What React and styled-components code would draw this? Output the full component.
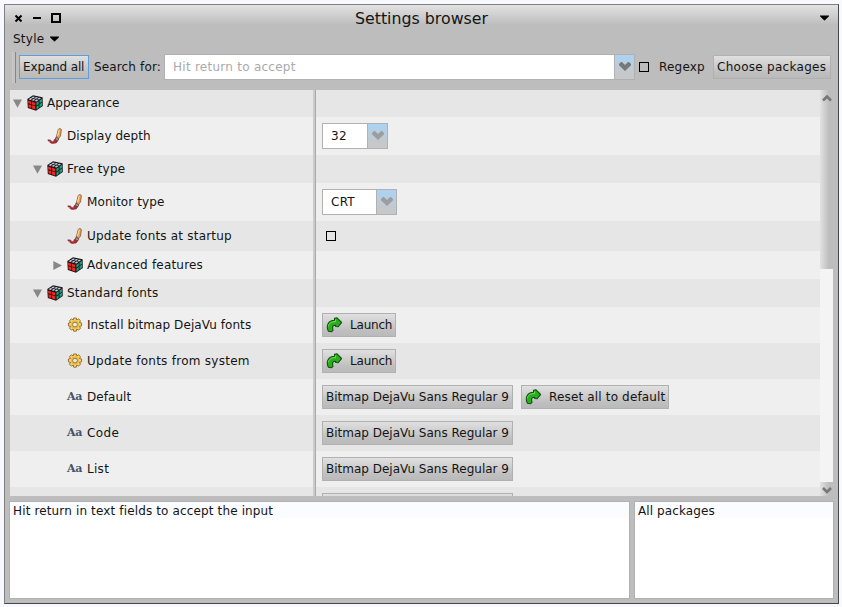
import React from "react";
import styled, { createGlobalStyle, css } from "styled-components";

const Global = createGlobalStyle`
  * { box-sizing: border-box; }
  body { margin: 0; background: #f8f8ff; overflow: hidden; }
`;

const face = "linear-gradient(#e0e0e0, #bfbfbf 75%, #bababa)";

const Window = styled.main`
  width: 835px;
  height: 600px;
  margin: 4px 0 0 4px;
  display: flex;
  flex-direction: column;
  border: 1px solid #808080;
  border-right-color: #45484b;
  border-bottom-color: #45484b;
  background: linear-gradient(#e2e2e2, #bdbdbd 20px);
  color: #141414;
  font: 12px/16px "DejaVu Sans", "Noto Sans", sans-serif;
  white-space: nowrap;
`;
const Text = styled.span`
  letter-spacing: ${(p) => p.$track || 0}px;
`;
const TitleBar = styled.header`
  height: 25px;
  display: flex;
  align-items: center;
  padding: 1px 9px 0 9px;
`;
const WindowControls = styled.div`
  flex: 1;
  display: flex;
  svg { display: block; }
`;
const Title = styled.h1`
  margin: 0;
  padding-top: 1px;
  font-size: 15.8px;
  font-weight: 400;
  line-height: 20px;
`;
const TitleEnd = styled.div`
  flex: 1;
  display: flex;
  justify-content: flex-end;
`;
const MenuBar = styled.nav`
  height: 18px;
  display: flex;
  align-items: center;
  gap: 6px;
  padding-left: 8px;
`;
const Toolbar = styled.div`
  height: 42px;
  display: flex;
  align-items: center;
  padding: 0 7px 4px 7px;
`;
const Grip = styled.span`
  width: 4px;
  height: 31px;
  margin: 1px 3px 0 0;
  border-left: 1px solid #c9c9c9;
  border-right: 1px solid #868686;
  background: #c3c3c3;
`;
const Button = styled.button`
  height: 24px;
  width: ${(p) => p.$w}px;
  display: flex;
  align-items: center;
  gap: 8px;
  flex: none;
  padding: 0 0 0 3px;
  border: 1px solid ${(p) => (p.$focused ? "#5c9ede" : "#b1b1b1")};
  background: ${face};
  color: inherit;
  font: inherit;
  white-space: nowrap;
`;
const SearchLabel = styled.label`
  width: 70px;
  margin-left: 5px;
  letter-spacing: 0.15px;
`;
const Combo = styled.div`
  width: ${(p) => p.$w}px;
  height: 26px;
  display: flex;
  border: 1px solid #b1b1b1;
  background: #fff;
`;
const ComboValue = styled.span`
  flex: 1;
  padding-left: 8px;
  line-height: 24px;
  letter-spacing: 0.26px;
  color: ${(p) => (p.$hint ? "#aaa" : "inherit")};
`;
const ComboArrow = styled.span`
  width: 20px;
  display: flex;
  align-items: center;
  justify-content: center;
  padding-bottom: 1px;
  border-left: 1px solid #b1b1b1;
  background: linear-gradient(#abd3f6, #c6c8ca 75%);
`;
const CheckBox = styled.span`
  width: 10px;
  height: 10px;
  flex: none;
  margin-left: 4px;
  border: 1px solid #000;
`;
const RegexpLabel = styled.label`
  width: 54px;
  margin-left: 10px;
  letter-spacing: 0.2px;
`;
const TreeArea = styled.section`
  height: 406px;
  margin: 0 5px;
  display: flex;
  overflow: hidden;
`;
const Rows = styled.div`
  width: 810px;
  flex: none;
`;
const Row = styled.div`
  height: ${(p) => p.$h}px;
  display: flex;
  background: ${(p) => (p.$dark ? "#e6e6e6" : "#efefef")};
`;
const NameCell = styled.div`
  width: 306px;
  display: flex;
  align-items: center;
  padding-left: ${(p) => 3 + p.$depth * 20}px;
  padding-bottom: ${(p) => p.$lift}px;
  border-right: 1px solid #a9a9a9;
  box-shadow: inset -2px 0 #cbcbcb;
`;
const Disclosure = styled.span`
  width: 9px;
  height: 9px;
  margin-right: 5px;
  svg { display: block; }
`;
const IconBox = styled.span`
  width: 16px;
  height: 16px;
  margin-right: 4px;
  svg { display: block; }
`;
const ValueCell = styled.div`
  flex: 1;
  display: flex;
  align-items: center;
  gap: 8px;
  padding-left: 6px;
`;
const ScrollBar = styled.div`
  width: 13px;
  display: flex;
  flex-direction: column;
  background: #f4f4f4;
`;
const scrollPart = css`
  background: linear-gradient(90deg, #e2e2e2, #bdbdbd 9px);
  display: flex;
  justify-content: center;
`;
const ScrollThumb = styled.div`
  ${scrollPart}
  height: 179px;
  padding-top: 5px;
`;
const ScrollDown = styled.div`
  ${scrollPart}
  height: 14px;
  margin-top: auto;
  padding-top: 5px;
`;
const Panels = styled.section`
  display: flex;
  gap: 4px;
  margin: 5px 4px 0;
`;
const Panel = styled.div`
  width: ${(p) => p.$w}px;
  height: 98px;
  padding: 1px 3px;
  border: 1px solid #b1b1b1;
  background: linear-gradient(#fbfcff 16px, #fff 16px);
`;

const Down = () => (
  <svg width="9" height="9" viewBox="0 0 9 9"><path d="M0 .5h9L4.5 8.8z" fill="#888" /></svg>
);
const Right = () => (
  <svg width="9" height="9" viewBox="0 0 9 9"><path d="M.3 0v9L9 4.5z" fill="#888" /></svg>
);
const Caret = () => (
  <svg width="9" height="6" viewBox="0 0 9 6"><path d="M0 .5h9v.8L4.7 5.5h-.4L0 1.3z" /></svg>
);
const Chevron = ({ color = "#777" }) => (
  <svg width="12" height="9" viewBox="0 0 12 9">
    <path d="M0 2l2-2h1l3 3 3-3h1l2 2v1.2L6 9 0 3.2z" fill={color} />
  </svg>
);
const ScrollArrow = ({ up }) => (
  <svg width="10" height="7" viewBox="0 0 10 7">
    <path d={up ? "M1 5.5L5 1.5l4 4" : "M1 1l4 4 4-4"} fill="none" stroke="#777" strokeWidth="2.6" />
  </svg>
);
const Cube = () => (
  <svg width="16" height="16" viewBox="0 0 16 16">
    <path d="M.3 4L6 .3 15.6 2.3 15.8 11 9 15.8.8 13z" fill="#17171a" />
    <path d="M1.6 4.3l1.9-1.2 2 .5-1.8 1.3zM4.2 2.7L6.1 1.5l2 .4-1.9 1.3zM4.6 5.2l1.8-1.3 2 .5-1.7 1.4zM7.1 3.4L9 2.1l2 .4-1.7 1.3zM7.7 6l1.7-1.4 2 .4L9.600 6.400zM10.200 4l1.700-1.300 2.200.400-1.800 1.300z" fill="#c9c9dc" />
    <path d="M1 5.700l3 .800v2.600l-2.800-.900zM4.900 6.800l3.400.900v2.700l-3.300-1zM1.400 9.200l2.700.900v3l-2.500-.900zM5 10.300l3.300 1v3.200l-3.200-1.100z" fill="#f5251f" />
    <path d="M9.400 7.800l2.300-1.600v2.700l-2.200 1.500zM12.500 5.600L15 3.900v2.700l-2.400 1.600zM9.500 11.400l2.200-1.500v2.900l-2.200 1.600zM12.500 9.300L15 7.600v2.800l-2.400 1.800z" fill="#13a77d" />
  </svg>
);
const Brush = () => (
  <svg width="16" height="16" viewBox="0 0 16 16">
    <path d="M11.300 1.300L13 .5l1.400 1-.9 6.500-2 2.500-2.300-1z" fill="#f0a04c" stroke="#7d5640" strokeWidth=".8" />
    <path d="M12.300 1.500l-1.800 6.500" stroke="#ffd594" strokeWidth="1.100" />
    <path d="M8.800 9.500l3 1.200-.9 2-3-.9z" fill="#a5a5a8" stroke="#493c3b" strokeWidth=".8" />
    <path d="M7.400 11.500l3.200 1.400-1.400 2-4.200.6-2.300-1.200 1.500-.8-3-.5-.3-1.200 3 .4L4.500 14l1.900-.6z" fill="#b52c32" stroke="#7e2025" strokeWidth=".6" />
  </svg>
);
const Gear = () => (
  <svg width="16" height="16" viewBox="0 0 16 16">
    <path fillRule="evenodd" d="M6.700 1h2.600l.5 2 1.800-1.200 1.900 1.900-1.100 1.800 2.200.5v2.900l-2.200.5 1.100 1.800-1.900 1.900-1.800-1.100-.5 2.200H6.700l-.5-2.200-1.800 1.100-1.900-1.900 1.100-1.800-2.200-.5V6l2.200-.5-1.100-1.800 1.900-1.900L6.200 3zM8 5.200a2.400 2.400 0 100 4.800 2.400 2.400 0 000-4.800z" fill="#f8d158" stroke="#94713a" strokeWidth="1" />
    <circle cx="8" cy="7.600" r="3.600" fill="none" stroke="#dba83d" strokeWidth=".7" />
  </svg>
);
const FontGlyph = styled.span`
  display: block;
  width: 16px;
  color: #465366;
  font: 700 11px/16px "DejaVu Serif", serif;
  letter-spacing: -0.4px;
`;
const LaunchArrow = () => (
  <svg width="16" height="16" viewBox="0 0 16 16">
    <path d="M8.500 1.200l2.500-.4 4.600 4.700-3.600 4.300-2.300-.3V8.200C6.800 8.200 6 9.200 7 13.300l-1.600 1.500-3-.5C-.3 8.500 2.300 3.400 8.500 3.300z" fill="#2aae1d" stroke="#12500d" strokeWidth="1.100" strokeLinejoin="round" />
    <path d="M2.400 9.500C2.700 6.300 5.300 4.600 9.500 4.700V2.600" fill="none" stroke="#72dc59" strokeWidth="1" />
  </svg>
);

const icons = { cube: <Cube />, brush: <Brush />, gear: <Gear />, font: <FontGlyph>Aa</FontGlyph> };
const bitmap = "Bitmap DejaVu Sans Regular 9";
const rows = [
  { h: 27, lift: 1, depth: 0, open: true, icon: "cube", name: "Appearance", track: 0.05 },
  { h: 38, lift: 1, depth: 1, icon: "brush", name: "Display depth", track: 0.05, combo: ["32", 66] },
  { h: 28, depth: 1, open: true, icon: "cube", name: "Free type", track: 0.27 },
  { h: 38, lift: 1, depth: 2, icon: "brush", name: "Monitor type", track: 0.1, combo: ["CRT", 75] },
  { h: 30, depth: 2, icon: "brush", name: "Update fonts at startup", track: 0.2, check: true },
  { h: 28, depth: 2, open: false, icon: "cube", name: "Advanced features", track: 0.2 },
  { h: 28, depth: 1, open: true, icon: "cube", name: "Standard fonts", track: 0.2 },
  { h: 36, lift: 1, depth: 2, icon: "gear", name: "Install bitmap DejaVu fonts", track: 0.07, launch: true },
  { h: 36, lift: 1, depth: 2, icon: "gear", name: "Update fonts from system", track: 0.27, launch: true },
  { h: 36, lift: 1, depth: 2, icon: "font", name: "Default", track: 0.05, font: bitmap, reset: true },
  { h: 36, lift: 1, depth: 2, icon: "font", name: "Code", track: 0.4, font: bitmap },
  { h: 36, lift: 1, depth: 2, icon: "font", name: "List", track: 0.3, font: bitmap },
  { h: 36, depth: 2, name: "", font: " " },
];

function SettingRow({ item, dark }) {
  return (
    <Row $h={item.h} $dark={dark}>
      <NameCell $depth={item.depth} $lift={item.lift || 0}>
        <Disclosure>{item.open === true ? <Down /> : item.open === false ? <Right /> : null}</Disclosure>
        <IconBox>{icons[item.icon]}</IconBox>
        <Text $track={item.track}>{item.name}</Text>
      </NameCell>
      <ValueCell>
        {item.combo && (
          <Combo $w={item.combo[1]}>
            <ComboValue>{item.combo[0]}</ComboValue>
            <ComboArrow><Chevron color="#9b9da0" /></ComboArrow>
          </Combo>
        )}
        {item.check && <CheckBox />}
        {item.launch && <Button $w={74}><LaunchArrow /><Text $track={-0.2}>Launch</Text></Button>}
        {item.font && <Button $w={191}><Text>{item.font}</Text></Button>}
        {item.reset && <Button $w={148}><LaunchArrow /><Text $track={0.16}>Reset all to default</Text></Button>}
      </ValueCell>
    </Row>
  );
}

export default function App() {
  return (
    <>
      <Global />
      <Window>
        <TitleBar>
          <WindowControls>
            <svg width="50" height="12" viewBox="0 0 50 12" fill="none" stroke="#000">
              <path d="M1.500 3.500l6 6m0-6l-6 6" strokeWidth="2" />
              <path d="M19 6h8M38 2h8v8h-8z" strokeWidth="2" />
            </svg>
          </WindowControls>
          <Title>Settings browser</Title>
          <TitleEnd><Caret /></TitleEnd>
        </TitleBar>
        <MenuBar><Text $track={0.25}>Style</Text><Caret /></MenuBar>
        <Toolbar>
          <Grip />
          <Button $w={70} $focused><Text $track={-0.14}>Expand all</Text></Button>
          <SearchLabel>Search for:</SearchLabel>
          <Combo $w={471}>
            <ComboValue $hint>Hit return to accept</ComboValue>
            <ComboArrow><Chevron /></ComboArrow>
          </Combo>
          <CheckBox />
          <RegexpLabel>Regexp</RegexpLabel>
          <Button $w={118}><Text $track={0.28}>Choose packages</Text></Button>
        </Toolbar>
        <TreeArea>
          <Rows>
            {rows.map((item, i) => <SettingRow key={i} item={item} dark={i % 2 === 0} />)}
          </Rows>
          <ScrollBar>
            <ScrollThumb><ScrollArrow up /></ScrollThumb>
            <ScrollDown><ScrollArrow /></ScrollDown>
          </ScrollBar>
        </TreeArea>
        <Panels>
          <Panel $w={621}><Text $track={0.14}>Hit return in text fields to accept the input</Text></Panel>
          <Panel $w={200}><Text $track={0.1}>All packages</Text></Panel>
        </Panels>
      </Window>
    </>
  );
}
